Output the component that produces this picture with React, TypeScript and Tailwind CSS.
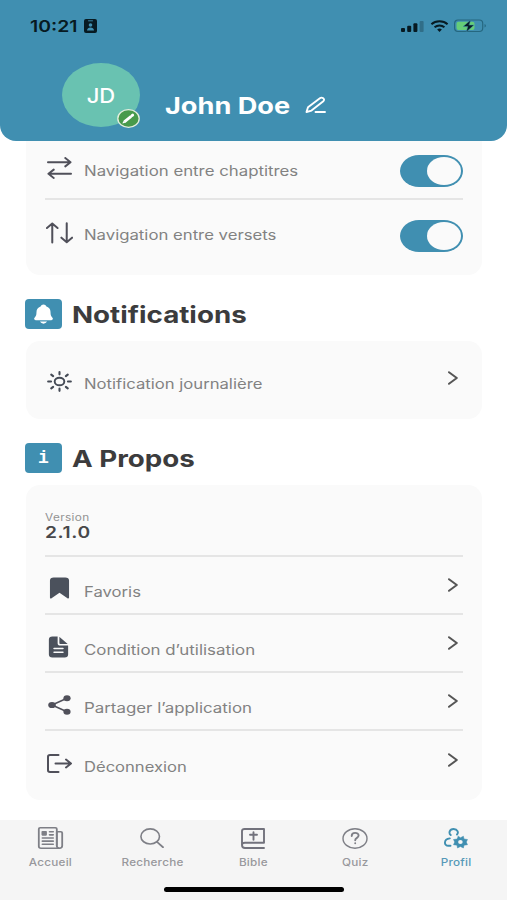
import type { ReactNode } from "react";
import { IoBookmark, IoDocumentText, IoNewspaperOutline, IoNotifications } from "react-icons/io5";

type IconProps = { className?: string; box: string; children: ReactNode };

function Icon({ className = "", box, children }: IconProps) {
  return (
    <svg viewBox={box} preserveAspectRatio="none" fill="none" stroke="currentColor" strokeLinecap="round" strokeLinejoin="round" className={`block shrink-0 ${className}`}>
      {children}
    </svg>
  );
}

function T({ className = "", children }: { className?: string; children: ReactNode }) {
  return <span className={`inline-block origin-left whitespace-nowrap ${className}`}>{children}</span>;
}

function Toggle() {
  return (
    <div className="flex h-8 w-[63px] shrink-0 items-center justify-end rounded-[19px/16px] bg-[#408fb1] pr-[2px]">
      <div className="h-[28px] w-[34px] rounded-[50%] bg-[#fafafa]" />
    </div>
  );
}

function Chevron() {
  return (
    <Icon box="0 0 10 14" className="mr-[5px] h-[14px] w-[10px] text-[#555]">
      <path d="M1 1.2 8.8 7 1 12.8" strokeWidth="2" />
    </Icon>
  );
}

function Row({ icon, label, className }: { icon: ReactNode; label: ReactNode; className: string }) {
  return (
    <div className={`flex items-center ${className}`}>
      <div className="flex w-[39px] shrink-0 items-center">{icon}</div>
      <div className="flex-1 pt-[13px] text-[14px] leading-[18px] text-[#828282]">{label}</div>
      <Chevron />
    </div>
  );
}

function Section({ icon, title, className }: { icon: ReactNode; title: ReactNode; className: string }) {
  return (
    <div className={`flex h-[30px] items-center pl-[25px] ${className}`}>
      <div className="flex h-[30px] w-[37px] items-center justify-center rounded-[4px] bg-[#408fb1] text-white">{icon}</div>
      <h2 className="mt-[2px] ml-[10px] text-[23px] leading-[30px] font-bold text-[#3c3c3d]">{title}</h2>
    </div>
  );
}

function Tab({ icon, label, active = false }: { icon: ReactNode; label: string; active?: boolean }) {
  return (
    <div className={`flex flex-col items-center ${active ? "text-[#408fb1]" : "text-[#7e7f86]"}`}>
      <div className="flex h-[24px] items-center">{icon}</div>
      <span className={`mt-[5px] inline-block scale-x-[1.17] text-[10px] leading-[14px] font-medium tracking-[0.2px] ${active ? "text-[#5599b8]" : "text-[#98989c]"}`}>{label}</span>
    </div>
  );
}

export default function App() {
  return (
    <div className="flex h-[900px] w-[507px] flex-col overflow-hidden bg-white font-['Inter','Liberation_Sans',sans-serif]">
      <header className="h-[141px] shrink-0 rounded-b-[16px] bg-[#408fb1]">
        <div className="flex h-[52px] items-center pr-[20px] pl-[30px] text-[#071a22]">
          <T className="w-[54px] scale-x-[1.21] text-[16px] leading-5 font-semibold">10:21</T>
          <Icon box="0 0 13 14" className="h-[14px] w-[13px]">
            <rect width="13" height="14" rx="2" fill="currentColor" stroke="none" />
            <path d="M4.5 1.8h4" stroke="#408fb1" strokeWidth=".9" />
            <circle cx="6.5" cy="6" r="1.8" fill="#408fb1" stroke="none" />
            <path d="M3 11.5c0-4 7-4 7 0z" fill="#408fb1" stroke="none" />
          </Icon>
          <div className="flex-1" />
          <Icon box="0 0 23 11" className="mr-[6px] h-[11px] w-[23px]">
            <g fill="currentColor" stroke="none">
              <rect y="7" width="4" height="4" rx="1" />
              <rect x="6.2" y="4.7" width="4" height="6.3" rx="1" />
              <rect x="12.4" y="2.2" width="4" height="8.8" rx="1" />
              <rect x="18.6" width="4" height="11" rx="1" opacity=".28" />
            </g>
          </Icon>
          <Icon box="0 0 20 12" className="mr-[5px] h-[12px] w-[19px]">
            <path d="M1.5 4.3C6 .3 14 .3 18.5 4.3M4.8 7.3c3-2.5 7.4-2.5 10.4 0" strokeWidth="2.1" strokeLinecap="butt" />
            <path d="M7.5 9.5q2.5-1.8 5 0L10 12z" fill="currentColor" stroke="none" />
          </Icon>
          <Icon box="0 0 34 14" className="h-[14px] w-[33px]">
            <rect x=".6" y="1" width="29" height="11.5" rx="3.5" stroke="#25677f" strokeWidth="1.2" />
            <rect x="2.6" y="2.7" width="18.5" height="8.2" rx="2" fill="#65cd78" stroke="none" />
            <path d="M31.5 5v3.5c1.8-.4 1.8-3.1 0-3.5z" fill="#25677f" stroke="none" />
            <path d="M17.2 1 9.4 7.6h4.8L12.6 13l8-6.9h-4.9z" fill="currentColor" stroke="#408fb1" strokeWidth=".5" />
          </Icon>
        </div>
        <div className="flex pl-[62px]">
          <div className="relative mt-[11px] flex h-[64px] w-[78px] items-center justify-center rounded-[50%] bg-[#69c2b1] text-white">
            <span className="mt-[2px] inline-block scale-x-[1.1] text-[20px] leading-6 font-medium">JD</span>
            <Icon box="0 0 23 19" className="absolute right-0 -bottom-px h-[19px] w-[23px]">
              <ellipse cx="11.5" cy="9.5" rx="10.7" ry="8.8" fill="#489a4c" stroke="#e5efdf" strokeWidth="1.3" />
              <path d="m7.3 12.8 6.8-5.5" stroke="white" strokeWidth="2.8" strokeLinecap="butt" />
              <path d="m14.9 6.7.8-.6" stroke="white" strokeWidth="2.8" />
              <path d="m6.3 12-.9 2.5 3-.8z" fill="white" stroke="none" />
            </Icon>
          </div>
          <T className="mt-[39px] ml-[25px] w-[140px] scale-x-[1.18] text-[23px] leading-[30px] font-bold text-white">John Doe</T>
          <Icon box="0 0 22 18" className="mt-[44px] h-[18px] w-[22px] text-white">
            <path d="M1.5 16 3 11.3 14.9 2.2c2-1.5 5.8.8 3.4 3L6.5 14.6zM10.5 16H20" strokeWidth="1.9" />
          </Icon>
        </div>
      </header>

      <main className="flex h-[679px] shrink-0 flex-col">
        <section className="mr-[25px] ml-[26px] h-[134px] shrink-0 rounded-b-[14px] bg-[#fafafa] px-[19px]">
          <div className="flex h-[59px] items-center border-b-2 border-[#e5e5e5]">
            <Icon box="0 0 26 22" className="mr-[12px] mb-[4px] ml-[2px] h-[22px] w-[25px] text-[#50505a]">
              <path d="M1 5.2h23M19 1l5.5 4.2L19 9.4M25 16.8H1.5M7 12.6l-5.5 4.2L7 21" strokeWidth="2" />
            </Icon>
            <div className="flex-1 pt-[3px] text-[14px] leading-[18px] text-[#828282]"><T className="scale-x-[1.2]">Navigation entre chaptitres</T></div>
            <div className="pt-[3px]"><Toggle /></div>
          </div>
          <div className="flex h-[67px] items-center">
            <Icon box="0 0 28 22" className="mr-[11px] mb-[2px] ml-[1px] h-[22px] w-[27px] text-[#50505a]">
              <path d="M6.5 20.5V1.5M1 6l5.5-4.5L12 6M21.5 1.2v18.5M16 15.7l5.5 4.5 5.5-4.5" strokeWidth="2.1" />
            </Icon>
            <div className="flex-1 pt-[2px] text-[14px] leading-[18px] text-[#828282]"><T className="scale-x-[1.195]">Navigation entre versets</T></div>
            <div className="pt-[4px]"><Toggle /></div>
          </div>
        </section>

        <Section
          className="mt-6"
          icon={<IoNotifications preserveAspectRatio="none" className="h-[22px] w-[25px]" />}
          title={<T className="scale-x-[1.205]">Notifications</T>}
        />
        <section className="mr-[25px] ml-[26px] mt-3 h-[78px] shrink-0 rounded-[14px] bg-[#fafafa] px-[19px]">
          <Row
            className="h-[73px]"
            icon={
              <Icon box="0 0 26 22" className="mt-[7px] ml-[2px] h-[21px] w-[25px] text-[#454b56]">
                <ellipse cx="13" cy="11" rx="5" ry="4" strokeWidth="2" />
                <path d="M13 1.2v2.3M13 18.5v2.3M1.2 11h3M21.8 11h3M4.4 3.8l2 1.6M19.6 16.6l2 1.6M21.6 3.8l-2 1.6M6.4 16.6l-2 1.6" strokeWidth="2.2" />
              </Icon>
            }
            label={<T className="scale-x-[1.19]">Notification journalière</T>}
          />
        </section>

        <Section
          className="mt-[24px]"
          icon={<span className="inline-block font-['Liberation_Mono',monospace] text-[18px] leading-5 font-bold">i</span>}
          title={<T className="scale-x-[1.205]">A Propos</T>}
        />
        <section className="mr-[25px] ml-[26px] mt-3 h-[315px] shrink-0 rounded-[14px] bg-[#fafafa] px-[19px]">
          <div className="flex h-[72px] flex-col items-start border-b-2 border-[#e5e5e5] pt-[25px]">
            <T className="scale-x-[1.18] text-[10px] leading-[14px] tracking-[0.3px] text-[#929292]">Version</T>
            <T className="-mt-px scale-x-[1.2] text-[16px] leading-[18px] font-semibold tracking-[0.5px] text-[#48484a]">2.1.0</T>
          </div>
          <Row
            className="h-[58px] border-b-2 border-[#e5e5e5]"
            icon={<IoBookmark preserveAspectRatio="none" viewBox="80 0 352 512" className="mt-[6px] ml-[4px] h-[24px] w-[21px] text-[#4b515c]" />}
            label={<T className="scale-x-[1.19]">Favoris</T>}
          />
          <Row
            className="h-[58px] border-b-2 border-[#e5e5e5]"
            icon={<IoDocumentText preserveAspectRatio="none" viewBox="64 24 384 464" className="mt-[7px] ml-[3px] h-[22px] w-[21px] text-[#4b515c]" />}
            label={<T className="scale-x-[1.205]">Condition d’utilisation</T>}
          />
          <Row
            className="h-[58px] border-b-2 border-[#e5e5e5]"
            icon={
              <Icon box="0 0 23 20" className="mt-[7px] ml-[3px] h-[20px] w-[23px] text-[#50505a]">
                <path d="m19 3.2-15 6.8 15 6.8" strokeWidth="1.5" />
                <g fill="currentColor" stroke="none">
                  <ellipse cx="19" cy="3.2" rx="3.6" ry="3" />
                  <ellipse cx="4" cy="10" rx="3.8" ry="3.1" />
                  <ellipse cx="19" cy="16.8" rx="3.6" ry="3" />
                </g>
              </Icon>
            }
            label={<T className="scale-x-[1.205]">Partager l’application</T>}
          />
          <Row
            className="h-[58px]"
            icon={
              <Icon box="0 0 25 19" className="mt-[6px] ml-[2px] h-[19px] w-[25px] text-[#50505a]">
                <path d="M11.5 1H3Q1 1 1 2.7v13.6Q1 18 3 18h8.5M8.5 9.5h15M19 5.5l5 4-5 4" strokeWidth="2" />
              </Icon>
            }
            label={<T className="scale-x-[1.185]">Déconnexion</T>}
          />
        </section>
      </main>

      <nav className="flex h-[80px] shrink-0 flex-col items-center bg-[#f5f5f5]">
        <div className="grid h-[67px] w-full grid-cols-5 pt-[6px]">
          <Tab icon={<IoNewspaperOutline preserveAspectRatio="none" viewBox="16 32 480 448" className="h-[22px] w-[27px]" />} label="Accueil" />
          <Tab
            icon={
              <Icon box="0 0 24 19" className="h-[20px] w-[24px]">
                <ellipse cx="10.2" cy="8" rx="9.3" ry="7.2" strokeWidth="1.6" />
                <path d="m17 13.2 6 5" strokeWidth="1.8" />
              </Icon>
            }
            label="Recherche"
          />
          <Tab
            icon={
              <Icon box="0 0 24 21" className="h-[21px] w-[24px] text-[#72727c]">
                <path d="M23 14.7V1H3.5Q1 1 1 3v14q0 3 3 3h19M1 17q0-2.3 3-2.3h19M12.5 4.3v7.4M9 6.8h7" strokeWidth="1.9" />
              </Icon>
            }
            label="Bible"
          />
          <Tab
            icon={
              <Icon box="0 0 26 21" className="h-[21px] w-[26px]">
                <ellipse cx="13" cy="10.5" rx="12" ry="9.7" strokeWidth="1.4" />
                <path d="M9.7 8c0-4.2 6.9-3.9 6.9-.4 0 2.4-3.4 2.2-3.4 4.7M13.2 15.2v.1" strokeWidth="1.9" />
              </Icon>
            }
            label="Quiz"
          />
          <Tab
            active
            icon={
              <Icon box="0 0 24 21" className="h-[21px] w-[24px]">
                <path d="M6.7 7.1C4.6 5.4 5.2 1 9.6 1c4.1 0 5.2 3.7 3.4 5.5M5.8 10.4C-.7 11.2-.2 18 4.5 17.8h2" strokeWidth="1.9" />
                <path d="m14.4 8.2 2 1.6 3-1.6.6 2.8 3.5.5-1.2 2.6 1.2 2.6-3.5.5-.6 2.8-3-1.5-2.9 1.5-.5-2.8-3.5-.5 1.2-2.6-1.2-2.6 3.5-.5z" fill="currentColor" strokeWidth=".5" />
                <ellipse cx="16.4" cy="14.1" rx="2.3" ry="2" fill="#f5f5f5" stroke="none" />
              </Icon>
            }
            label="Profil"
          />
        </div>
        <div className="h-[5px] w-[180px] rounded-full bg-black" />
      </nav>
    </div>
  );
}
